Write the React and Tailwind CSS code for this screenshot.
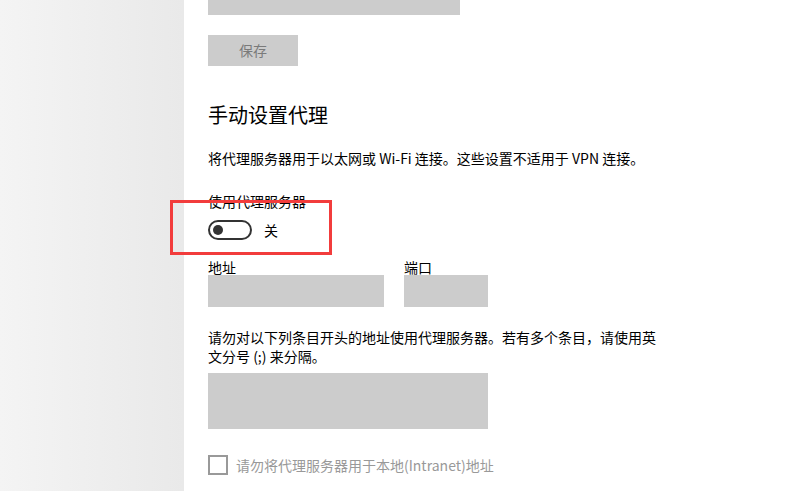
import React from "react";

const font = { fontFamily: '"Noto Sans CJK SC", "Noto Sans", sans-serif' };

const ProxySettings = () => {
  return (
    <div
      className="flex h-[491px] w-full overflow-hidden bg-white text-black"
      style={font}
    >
      {/* 左侧导航栏背景 */}
      <div className="h-full w-[184px] shrink-0 bg-gradient-to-r from-[#f4f4f4] to-[#e9e9e9]" />

      <div className="flex flex-col pl-[24px]">
        {/* 上方输入框（被滚动裁掉一半） */}
        <div className="h-[15px] w-[252px] bg-[#cccccc]" />

        <button className="mt-[20px] flex h-[31px] w-[90px] items-center justify-center bg-[#cccccc] text-[14px] text-[#7a7a7a]">
          保存
        </button>

        <h2 className="mt-[35px] text-[20px] leading-[28px]">手动设置代理</h2>

        <p className="mt-[19px] text-[14px] leading-[20px]">
          将代理服务器用于以太网或 Wi-Fi 连接。这些设置不适用于 VPN 连接。
        </p>

        <div className="relative">
          <p className="mt-[23px] text-[14px] leading-[20px]">使用代理服务器</p>
          <div className="mt-[9px] flex items-center gap-[12px]">
            <div className="flex h-[20px] w-[44px] items-center rounded-full border-2 border-[#333333] pl-[3px]">
              <div className="h-[10px] w-[10px] rounded-full bg-[#333333]" />
            </div>
            <span className="text-[14px] leading-[20px]">关</span>
          </div>
          {/* 红色标注框 */}
          <div className="pointer-events-none absolute left-[-38px] top-[32px] h-[55px] w-[162px] border-[3px] border-[#f23c3c]" />
        </div>

        <div className="mt-[19px] flex gap-[20px]">
          <div className="flex flex-col">
            <label className="text-[14px] leading-[16px]">地址</label>
            <div className="h-[32px] w-[176px] bg-[#cccccc]" />
          </div>
          <div className="flex flex-col">
            <label className="text-[14px] leading-[16px]">端口</label>
            <div className="h-[32px] w-[84px] bg-[#cccccc]" />
          </div>
        </div>

        <p className="mt-[21px] w-[452px] text-[14px] leading-[19px]">
          请勿对以下列条目开头的地址使用代理服务器。若有多个条目，请使用英文分号 (;) 来分隔。
        </p>

        <div className="mt-[7px] h-[56px] w-[280px] bg-[#cccccc]" />

        <div className="mt-[26px] flex items-center gap-[8px]">
          <div className="h-[20px] w-[20px] border-2 border-[#999999]" />
          <span className="text-[14px] leading-[20px] text-[#999999]">
            请勿将代理服务器用于本地(Intranet)地址
          </span>
        </div>
      </div>
    </div>
  );
};

export default function App() {
  return <ProxySettings />;
}
